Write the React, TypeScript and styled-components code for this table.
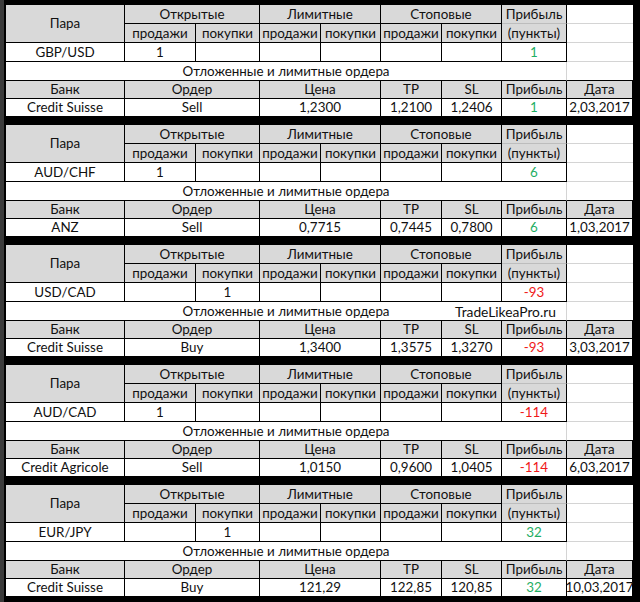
import React from 'react';
import styled, { createGlobalStyle } from 'styled-components';

const Global = createGlobalStyle`
  html, body { margin: 0; padding: 0; background: #000; }
`;

const Page = styled.div`
  width: 640px;
  height: 602px;
  box-sizing: border-box;
  background: #000;
  border-left: 4px solid #3a3a3a;
  padding: 5px 0 0 2px;
  display: flex;
  flex-direction: column;
  gap: 8px;
  font-family: Lato, "Open Sans", "Liberation Sans", sans-serif;
  font-size: 13.4px;
  color: #111;
  overflow: hidden;
`;

const Block = styled.div`
  display: grid;
  width: 627px;
  grid-template-columns: 119px 71px 64px 61px 60px 61px 60px 65px 66px;
  grid-template-rows: 19px 19px 19px 19px 18px 18px;
  background: #fff;
`;

type Tone = 'up' | 'down';

const Cell = styled.div<{
  $head?: boolean;
  $span?: number;
  $rspan?: number;
  $rb?: string;
  $bb?: string;
  $tone?: Tone;
}>`
  grid-column: span ${(p) => p.$span ?? 1};
  grid-row: span ${(p) => p.$rspan ?? 1};
  box-sizing: border-box;
  background: ${(p) => (p.$head ? '#d9d9d9' : '#fff')};
  border-right: 1px solid ${(p) => p.$rb ?? '#000'};
  border-bottom: 1px solid ${(p) => p.$bb ?? '#000'};
  display: flex;
  align-items: center;
  justify-content: center;
  white-space: nowrap;
  line-height: 1;
  padding-top: 1px;
  color: ${(p) => (p.$tone === 'up' ? '#1fae64' : p.$tone === 'down' ? '#f01818' : '#111')};
`;

const Banner = styled(Cell)`
  position: relative;
`;

const Watermark = styled.span`
  position: absolute;
  left: 449px;
  top: 50%;
  transform: translateY(-50%);
  margin-top: 1px;
  font-size: 13.8px;
`;

const Spare = styled.div`
  grid-row: span 4;
  display: grid;
  grid-template-rows: 19px 19px 19px 1fr;
  border-bottom: 1px solid #000;
  box-sizing: border-box;
  background: #fff;
`;

const SpareLine = styled.div<{ $last?: boolean }>`
  border-bottom: ${(p) => (p.$last ? 'none' : '1px solid #d4d4d4')};
`;

interface Trade {
  pair: string;
  openSell?: string;
  openBuy?: string;
  profit: string;
  tone: Tone;
  bank: string;
  order: string;
  price: string;
  tp: string;
  sl: string;
  date: string;
  mark?: string;
}

const trades: Trade[] = [
  { pair: 'GBP/USD', openSell: '1', profit: '1', tone: 'up', bank: 'Credit Suisse', order: 'Sell', price: '1,2300', tp: '1,2100', sl: '1,2406', date: '2,03,2017' },
  { pair: 'AUD/CHF', openSell: '1', profit: '6', tone: 'up', bank: 'ANZ', order: 'Sell', price: '0,7715', tp: '0,7445', sl: '0,7800', date: '1,03,2017' },
  { pair: 'USD/CAD', openBuy: '1', profit: '-93', tone: 'down', bank: 'Credit Suisse', order: 'Buy', price: '1,3400', tp: '1,3575', sl: '1,3270', date: '3,03,2017', mark: 'TradeLikeaPro.ru' },
  { pair: 'AUD/CAD', openSell: '1', profit: '-114', tone: 'down', bank: 'Credit Agricole', order: 'Sell', price: '1,0150', tp: '0,9600', sl: '1,0405', date: '6,03,2017' },
  { pair: 'EUR/JPY', openBuy: '1', profit: '32', tone: 'up', bank: 'Credit Suisse', order: 'Buy', price: '121,29', tp: '122,85', sl: '120,85', date: '10,03,2017' },
];

const TradeBlock: React.FC<{ t: Trade }> = ({ t }) => (
  <Block>
    <Cell $head $rspan={2}>Пара</Cell>
    <Cell $head $span={2}>Открытые</Cell>
    <Cell $head $span={2}>Лимитные</Cell>
    <Cell $head $span={2}>Стоповые</Cell>
    <Cell $head $bb="#bdbdbd">Прибыль</Cell>
    <Spare>
      <SpareLine />
      <SpareLine />
      <SpareLine />
      <SpareLine $last />
    </Spare>
    <Cell $head>продажи</Cell>
    <Cell $head>покупки</Cell>
    <Cell $head>продажи</Cell>
    <Cell $head>покупки</Cell>
    <Cell $head>продажи</Cell>
    <Cell $head>покупки</Cell>
    <Cell $head>(пункты)</Cell>

    <Cell>{t.pair}</Cell>
    <Cell>{t.openSell ?? ''}</Cell>
    <Cell>{t.openBuy ?? ''}</Cell>
    <Cell />
    <Cell />
    <Cell />
    <Cell />
    <Cell $tone={t.tone}>{t.profit}</Cell>

    <Banner $span={8} $rb="#d4d4d4">
      Отложенные и лимитные ордера
      {t.mark && <Watermark>{t.mark}</Watermark>}
    </Banner>

    <Cell $head>Банк</Cell>
    <Cell $head $span={2}>Ордер</Cell>
    <Cell $head $span={2}>Цена</Cell>
    <Cell $head>TP</Cell>
    <Cell $head>SL</Cell>
    <Cell $head>Прибыль</Cell>
    <Cell $head>Дата</Cell>

    <Cell>{t.bank}</Cell>
    <Cell $span={2}>{t.order}</Cell>
    <Cell $span={2}>{t.price}</Cell>
    <Cell>{t.tp}</Cell>
    <Cell>{t.sl}</Cell>
    <Cell $tone={t.tone}>{t.profit}</Cell>
    <Cell>{t.date}</Cell>
  </Block>
);

export default function App() {
  return (
    <>
      <Global />
      <Page>
        {trades.map((t) => (
          <TradeBlock key={t.pair} t={t} />
        ))}
      </Page>
    </>
  );
}
